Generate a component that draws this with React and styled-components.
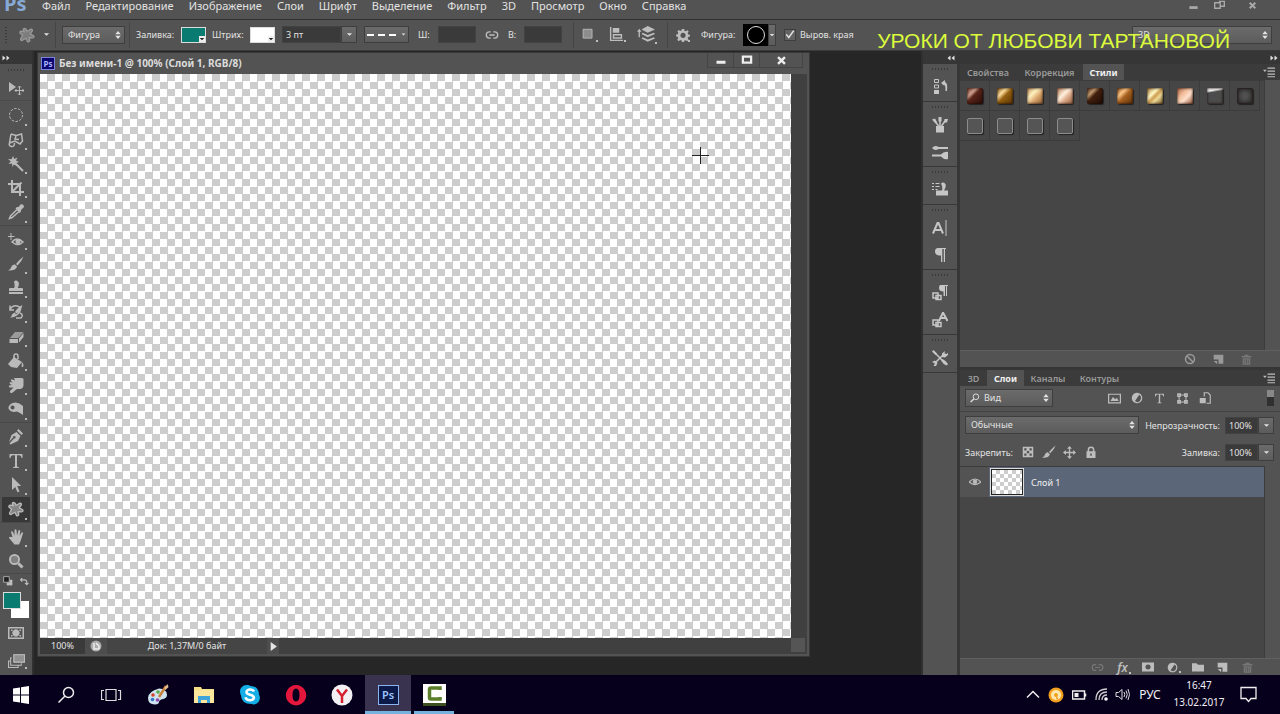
import React, { useState } from "react";
import styled, { createGlobalStyle, css } from "styled-components";

const GlobalStyle = createGlobalStyle`
    * {
        box-sizing: border-box;
    }
    body {
        margin: 0;
        overflow: hidden;
        background-color: #262626;
    }
    button, input, select {
        margin: 0;
        padding: 0;
        border: none;
        outline: none;
        border-radius: 0;
        font: inherit;
        color: inherit;
        background: none;
    }
    button {
        cursor: pointer;
    }
`;

const uiFont = `"Noto Sans", "Open Sans", sans-serif`;

const checker = (size) => css`
    background-color: #fff;
    background-image: repeating-conic-gradient(#cdcdcd 0 25%, #fff 0 50%);
    background-size: ${size}px ${size}px;
`;

const Screen = styled.div`
    position: relative;
    display: flex;
    flex-direction: column;
    height: 100vh;
    color: #e2e2e2;
    font-family: ${uiFont};
    font-size: 9px;
    line-height: 13px;
`;

/* ---------- icons ---------- */

const Svg = styled.svg`
    display: block;
    flex: none;
    fill: currentColor;
    stroke: none;

    .line {
        fill: none;
        stroke: currentColor;
    }
`;

const paths = {
    shape: <path d="M5.500 1.500q2 .3 2.500 2.800l4-2.100q2 .2 1.200 2l-2 2.600 3.600 2.200q.6 1.800-1.500 1.900l-3.100-.3.600 3.300q-1.200 1.700-2.500.3L7 11.300l-4.200 2.300q-1.700-.3-1.100-1.900l1.900-3.500L1 6.200q-.5-1.700 1.200-2l3 .4-.9-1.800q0-1.200 1.200-1.300z" fillOpacity=".6" stroke="currentColor" strokeWidth="1.300" />,
    move: <><path d="M1 2v10l7-5z" /><path className="line" d="M11.500 6v9M7 10.500h9M10 7.500l1.500-1.500L13 7.500M10 13.500l1.500 1.500 1.500-1.500M8.500 9L7 10.500 8.500 12M14.500 9l1.500 1.500-1.500 1.500" /></>,
    marquee: <circle className="line" cx="8" cy="8" r="6.500" strokeDasharray="2.500 1.500" />,
    lasso: <path className="line" strokeWidth="1.500" d="M3 2l-1.500 9 5.500-2 5 3 2.500-3-1-7L8 3.500 7 7l4 .5M3 2l5 1.500M1.500 11q-1 3 2 3.500t3-3.500" />,
    wand: <><path className="line" strokeWidth="2" d="M7 7l8 8" /><path d="M5 0l1.200 3L9.500 1.500 8 4.500l3 1.500-3 1 1 3-3.200-1.500L4.500 11l-.5-3.500L.5 8l2.300-2.500L0 3l3.500.2z" /></>,
    crop: <path className="line" strokeWidth="2" d="M4 0v12h12M0 4h12v12M13.500 2.500L5 11" />,
    dropper: <><path d="M9 3l1.500 0 2-2.500q2-1 3 .7t-.2 2.600L13 6v1.500L11.500 9 7.500 4.500z" /><path className="line" strokeWidth="1.500" d="M9 5.500l-6.500 6.500-1 2.500 2.700-1L11 7.500" /></>,
    heal: <><path className="line" d="M3 1v7M-.5 4.500h7" /><path className="line" strokeWidth="1.500" d="M4 10q5-6 11 0-5 5-11 0z" /><circle cx="10" cy="9.500" r="2.500" /></>,
    brush: <><path d="M15.500.5Q12 3 8 8l1.500 1.500Q14 5 15.500.5z" /><path d="M7 8.500l2 2Q8 15 0 14.500q3-1.500 3.500-4Q5 8 7 8.500z" /></>,
    stamp: <path d="M6 1.500Q8-.5 10 1.500T9.700 8H14q1 0 1 1v2H1V9q0-1 1-1h4.300Q7 5 6 1.500zM1 12h14v2H1z" />,
    history: <><path className="line" strokeWidth="1.500" d="M2 6Q4 1 9 2t3 5-6 5M2 1.500V6h4M12 9q4 2 1 5H8" /><path d="M14.500 1Q9 4 7 8l1.500 1.500Q13 7 14.500 1zM6.500 8.500L8 10q-1 4-6 3.500 2-1 2-3z" /></>,
    eraser: <><path d="M7 3h8.500l-5 6H2z" opacity=".7" /><path d="M1.500 10H10v4H1.500zM11 9.500l4.500-5.500v4L11 13.500z" /></>,
    bucket: <><path d="M6 4l8 5-5 6-6-1-3-3zM6.500 8" /><path className="line" strokeWidth="1.500" d="M6 8V3q0-2 2-2t2 2v3" /><path d="M14 9q2 2.500 1.500 4t-2 .5z" /></>,
    smudge: <path d="M6 1l8 0q1.500 0 1.500 1.500V8q0 3-3 4H9l-5 4q-2.500 0-2-2l3.500-3.500H1.500q-1.200-1-.3-2L4 8 2 7q-1-1.300.3-2L5 5.500 3 4q-.5-1.600.8-1.800L7 3.500z" />,
    dodge: <path fillRule="evenodd" d="M4.500 2Q10 0 15 5v9q-4-3-6-3.500-6 1.500-8-2T4.500 2zm0 2.500a2 2 0 1 0 .1 0z" />,
    pen: <path fillRule="evenodd" d="M10.500 0L15 4.500l-1.500 1.500L9 1.500zM8.500 3L12.500 7 10 12l-7.500 3.500L1.500 14.500l4-4.500.5-.5a1.300 1.300 0 1 0-1-1l-4 4.500L3.500 6z" />,
    type: <path d="M1.500 1h13v4h-1q-.3-2.800-2.500-2.800H9V13q0 1.200 2 1.200v.8H5v-.8q2 0 2-1.200V2.200H5Q2.800 2.200 2.500 5h-1z" />,
    arrow: <path d="M4 0v13l3.200-3 2.300 5.300 2-.9L9.200 9h4z" />,
    hand: <path d="M4.500 8L3 3q.7-1.500 2 0l1.500 3.500L6.500 1q1-1.500 2 0l.5 5.500L10.500 1.500q1.300-1 1.800.3L11.500 7l2-3.500q1.500-.8 1.500.7l-2.500 8L11 15.500H6.500L1 9q0-1.800 2-1z" />,
    zoom: <><circle cx="6.500" cy="6.500" r="4.500" className="line" strokeWidth="2" /><circle cx="6.500" cy="6.500" r="3.500" opacity=".45" /><path className="line" strokeWidth="3" d="M10.500 10.500l4 4" /></>,
    quickMask: <path fillRule="evenodd" d="M0 2h16v12H0zm1.500 1.500v9h13v-9zM3 4.500h1.500v1.500H3zm8.500 0H13v1.500h-1.500zM3 10h1.500v1.500H3zm8.500 0H13v1.500h-1.500zM8 4.300a3.700 3.700 0 1 1-.1 0z" />,
    screenMode: <><path d="M5 2h11v8H5z" opacity=".6" /><path className="line" d="M5.500 2.500h10v7h-10zM3.500 5.500h-1v7h10v-2M2.500 8.500h-2v6h9v-2" /></>,
    swap: <path className="line" strokeWidth="2" d="M1 5h7q4 0 4 4v4M4 2L1 5l3 3M9 10.500l3 3 3-3" />,
    defaults: <><path d="M6 6h9v9H6z" /><path d="M1 1h9v9H1z" fill="#222" stroke="#aaa" strokeWidth="1.500" /></>,
    link: <path className="line" strokeWidth="1.500" d="M6.500 4.500H5a3.500 3.500 0 0 0 0 7h1.500M9.500 4.500H11a3.500 3.500 0 0 1 0 7H9.500M5 8h6" />,
    pathOp: <><path d="M2 1h11v11H2z" opacity=".55" /><path className="line" d="M2.500 1.500h10v10h-10z" opacity=".8" /></>,
    align: <path fillRule="evenodd" d="M1 0h1.500v13.500H15V15H1zM4 1h7v5H4zM4 7.500h10v5H4zM5.500 9v2h7V9z" />,
    arrange: <path d="M9.500 0L16 3l-6.500 3L4 3zM5 6l4.500 2L15 6l1 1-6.500 3L4 7zM5 10l4.500 2 5.500-2 1 1-6.500 3L4 11zM0 5l2-2.500L4 5H2.600v5H1.400V5z" />,
    gear: <path fillRule="evenodd" d="M6.700 1h2.600l.4 2 1.500.6L13 2.500 14.500 4l-1.200 1.800.6 1.500 2 .4v2l-2 .5-.6 1.400 1.100 1.800-1.700 1.600-1.700-1.100-1.500.6-.4 1.500H6.800l-.5-1.700-1.500-.6L3.100 15l-1.700-1.700 1.100-1.700-.6-1.500-1.700-.5V7.500L2 7l.6-1.500-1.100-1.700 1.700-1.600 1.700 1.100 1.500-.6zM8 5.500a3 3 0 1 0 .1 0z" />,
    check: <path className="line" strokeWidth="2.500" d="M2 7l4 5 8-11" />,
    historyPanel: <><path className="line" d="M2.500.5h4v3h-4zM2.500 6h4v3h-4z" /><path d="M2 11h5v4H2zM9 4l4-3v2q3 1 2 9l-1.500 0q0-6-1-6.500V7z" /></>,
    brushes: <><path d="M4 9h8v6.500H4z" /><path className="line" strokeWidth="1.500" d="M6.500 9L3 4M8 9V3M9.500 9L13 4" /><path d="M0 2.500l3-1L5 5 3.500 6.500zM6.500 0h3v4.500h-3zM12.500 2L16 2l-1 3.500-3 0z" /></>,
    brushSettings: <path d="M0 4Q3 .5 6.500 3H16v2H6.500Q3 7.500 0 4zM0 10.500h9q3-3.500 7-2.500v7q-4 1-7-2.500H0z" />,
    cloneSource: <><path className="line" d="M0 1.500h2M3.500 1.500h4M0 4.500h2M3.500 4.500h4M0 7.500h2M3.500 7.500h2" /><path d="M9 1.500q2-2 4 0T12 8.500h4v5H4v-5h6Q11 5 9 1.500z" /></>,
    character: <><path className="line" strokeWidth="2" d="M1 13.500L5.500 3h1L11 13.500M3 10h6" /><path className="line" d="M14 0v16" /></>,
    paragraph: <path d="M6 1h8v1h-1v13h-1.200V2h-1.500v13H9V8.500H7q-4-.5-4-4T6 1z" />,
    paraStyles: <><path d="M9 0h7v1h-1v10h-1V1h-1v10h-1.500V6.500Q7 6.500 7 3t2-3z" /><path className="line" strokeWidth="1.500" d="M1 8h5v5H1zM4 10.500h5v4H4z" /></>,
    charStyles: <><path className="line" strokeWidth="2" d="M7 9L11 .5 15.500 9M9 6h5" /><path className="line" strokeWidth="1.500" d="M1 8h5v5H1zM4 10.500h5v4H4z" /></>,
    tools: <><path className="line" strokeWidth="1.500" d="M2 2l8 8M11 5l-8 8" /><path d="M0 1.500L1.500 0 5 3.500 3.500 5zM9 10.500L10.500 9q4 2 5.500 5l-1.500 1.500Q11 14 9 10.500zM10 3.500L13 1l-.5 2.500L15 4l1-1.500.0 2.500-3 2.500-3-.5zM0 12l3-1.500L5.500 13 4 16H1.500L3 13.500z" /></>,
    image: <path fillRule="evenodd" d="M0 2h16v12H0zm1.500 1.500v9h13v-9zM3 11l3-5 3 3 2-2 2 4z" />,
    adjust: <path fillRule="evenodd" d="M8 1a7 7 0 1 0 .1 0zM11 3.500q3 2 2.300 5.500t-4 4.500q-3 0-4-1.500z" />,
    vector: <path className="line" strokeWidth="1.500" d="M3 1v14M13 1v14M1 3h14M1 13h14M1 1h4v4H1zM11 1h4v4h-4zM1 11h4v4H1zM11 11h4v4h-4z" />,
    smart: <><path className="line" strokeWidth="1.500" d="M7 6V1h5l3 3v11h-5" /><path d="M1 8h8v7H1z" /></>,
    checkerLock: <path fillRule="evenodd" d="M1 1h14v14H1zm2 2v3h3V3zm7 0v3h3V3zM6.500 6.500v3h3v-3zM3 10v3h3v-3zm7 0v3h3v-3z" />,
    fourWay: <path d="M8 0l3 3.500H8.800V7.200h3.700V5L16 8l-3.500 3V8.800H8.800v3.700H11L8 16l-3-3.500h2.200V8.800H3.500V11L0 8l3.500-3v2.200h3.700V3.500H5z" />,
    lock: <path fillRule="evenodd" d="M2 7h1.500V5a4.500 4.500 0 0 1 9 0v2H14v9H2zm3.500 0h5V5a2.500 2.500 0 0 0-5 0zM7 10v3h2v-3z" />,
    eye: <><path className="line" strokeWidth="1.500" d="M0 8q8-8 16 0-8 7-16 0z" /><circle cx="8" cy="7.500" r="3" /></>,
    search: <><circle className="line" strokeWidth="1.500" cx="9.500" cy="6" r="4.500" /><path className="line" strokeWidth="2" d="M6 9.500L1 14.500" /></>,
    mask: <path fillRule="evenodd" d="M0 2h16v12H0zm8 2.500a3.500 3.500 0 1 0 .1 0z" />,
    folder: <path d="M0 3h6l2 2h8v9H0z" />,
    page: <path fillRule="evenodd" d="M1 1h14v13H8V8H1zM1 10h5v5z" />,
    trash: <path fillRule="evenodd" d="M1 3h4V1h6v2h4v2H1zM2.500 6h11v9.500h-11zM5 7.500V14h1V7.500zm2.500 0V14h1V7.500zm2.500 0V14h1V7.500z" />,
    ban: <><circle className="line" strokeWidth="2" cx="8" cy="8" r="6" /><path className="line" strokeWidth="2" d="M4 4l8 8" /></>,
    updown: <path d="M8 0l5.500 6.500h-11zM8 16l5.500-6.500h-11z" />,
    down: <path d="M2 5h12l-6 6z" />,
    right: <path d="M3 0l11 8-11 8z" />,
    dblRight: <path d="M1 3l6 5-6 5zM9 3l6 5-6 5z" />,
    dblLeft: <path d="M7 3L1 8l6 5zM15 3L9 8l6 5z" />,
    panelMenu: <path d="M0 5h5L2.500 8zM6 2h10v1.500H6zM6 6h10v1.500H6zM6 10h10v1.500H6zM6 13.500h10V15H6z" />,
    minimize: <path d="M2 9h12v4H2z" />,
    maximize: <path className="line" strokeWidth="3" d="M2.500 3.500h11v8h-11z" />,
    restore: <path className="line" strokeWidth="2" d="M1 4h8v8H1zM9 9h6V2H7" />,
    close: <path className="line" strokeWidth="3.500" d="M3 3l10 10M13 3L3 13" />,
};

const Icon = ({ name, size = 16, color }) => (
    <Svg width={size} height={size} viewBox="0 0 16 16" color={color} aria-hidden="true">
        {paths[name]}
    </Svg>
);

/* ---------- menu bar ---------- */

const MenuBar = styled.header`
    display: flex;
    align-items: center;
    height: 20px;
    flex: none;
    padding: 0 8px 8px 4px;
    background-color: #535353;
    border-bottom: 1px solid #303030;
    font-size: 11px;
`;

const Logo = styled.span`
    width: 31px;
    padding-bottom: 4px;
    color: #87a9d6;
    font-size: 20px;
    font-weight: 700;
    line-height: 20px;
`;

const MenuItem = styled.button`
    padding: 0 8px 0 7px;
    line-height: 12px;
`;

const Spacer = styled.div`
    flex: 1;
`;

const FrameButton = styled.button`
    display: flex;
    justify-content: center;
    width: ${props => props.$w || 26}px;
    color: #a9a9a9;
`;

const Caption = styled.h1`
    position: absolute;
    top: 28px;
    right: 50px;
    margin: 0;
    color: #ddfb3c;
    font-family: "Liberation Sans", sans-serif;
    font-size: 21px;
    font-weight: 400;
    line-height: 25px;
    white-space: nowrap;
    pointer-events: none;
`;

/* ---------- options bar ---------- */

const OptionsBar = styled.div`
    display: flex;
    align-items: center;
    flex: none;
    height: 31px;
    padding: 0 8px 1px 4px;
    background-color: #535353;
    border-bottom: 1px solid #3a3a3a;
    white-space: nowrap;
`;

const Cell = styled.div`
    display: flex;
    align-items: center;
    flex: none;
    gap: ${props => props.$gap || 0}px;
    width: ${props => props.$w}px;
`;

const Divider = styled.div`
    width: 1px;
    height: 26px;
    margin-right: ${props => props.$tight ? 0 : 6}px;
    background-color: #454545;
`;

const Grip = styled.div`
    width: ${props => props.$vertical ? 4 : 18}px;
    height: ${props => props.$vertical ? 18 : 4}px;
    background-image: radial-gradient(#3a3a3a 1px, transparent 1px);
    background-size: ${props => props.$vertical ? "4px 3px" : "3px 4px"};
`;

const SelectWrap = styled.span`
    position: relative;
    display: flex;
    align-items: center;
    flex: none;
    width: ${props => props.$w}px;
    height: 18px;
    background-image: linear-gradient(#6b6b6b, #5c5c5c);
    border: 1px solid #3e3e3e;

    select {
        appearance: none;
        width: 100%;
        padding: 0 14px 0 ${props => props.$pad || 5}px;
        line-height: 14px;
    }
    option {
        color: #222;
    }
    svg {
        position: absolute;
        right: 2px;
        pointer-events: none;
    }
    svg:nth-child(3) {
        left: 4px;
    }
`;

const Select = ({ label, options, width, pad, icon }) => (
    <SelectWrap $w={width} $pad={pad}>
        <select aria-label={label}>
            {options.map(o => <option key={o}>{o}</option>)}
        </select>
        <Icon name="updown" size={8} />
        {icon && <Icon name={icon} size={10} />}
    </SelectWrap>
);

const Swatch = styled.button`
    position: relative;
    width: 25px;
    height: 16px;
    background-color: ${props => props.$color};
    border: 1px solid #dcdcdc;

    svg {
        position: absolute;
        right: 0;
        bottom: 0;
        color: #222;
        background-color: #eee;
    }
`;

const Field = styled.input`
    width: ${props => props.$w}px;
    height: 17px;
    padding: 0 3px;
    background-color: #3a3a3a;
    border: 1px solid #424242;
    line-height: 14px;
`;

const DropButton = styled.button`
    display: flex;
    align-items: center;
    justify-content: center;
    width: ${props => props.$w || 16}px;
    height: ${props => props.$h || 17}px;
    background-image: linear-gradient(#6b6b6b, #5c5c5c);
    border: 1px solid #3e3e3e;
`;

const DashButton = styled(DropButton)`
    justify-content: space-evenly;
`;

const IconButton = styled.button`
    position: relative;
    display: flex;
    align-items: center;
    justify-content: center;
    flex: none;
    width: ${props => props.$w || 20}px;
    color: ${props => props.$dim ? "#777" : "#bdbdbd"};

    &::after {
        content: "";
        display: ${props => props.$more ? "block" : "none"};
        position: absolute;
        right: ${props => props.$corner || 4}px;
        bottom: 0;
        width: 2px;
        height: 2px;
        background-color: #bdbdbd;
    }
`;

const ShapePreview = styled.button`
    display: flex;
    align-items: center;
    justify-content: center;
    width: 25px;
    height: 22px;
    background-color: #000;
`;

const CheckLabel = styled.label`
    position: relative;
    display: flex;
    align-items: center;
    gap: 4px;

    input {
        appearance: none;
        width: 12px;
        height: 12px;
        background-color: #636363;
        border: 1px solid #3e3e3e;
    }
    svg {
        position: absolute;
        left: 1px;
        display: none;
        pointer-events: none;
    }
    input:checked + svg {
        display: block;
    }
`;

const Options = () => {
    const [snap, setSnap] = useState(true);
    return (
        <OptionsBar>
            <Cell $w={11}><Grip $vertical /></Cell>
            <Cell $w={40} $gap={4}>
                <IconButton $w={24} aria-label="Произвольная фигура"><Icon name="shape" size={16} color="#999" /></IconButton>
                <Icon name="down" size={7} />
            </Cell>
            <Divider />
            <Cell $w={67}><Select label="Режим" options={["Фигура", "Контур", "Пикселы"]} width={63} /></Cell>
            <Divider />
            <Cell $w={45}>Заливка:</Cell>
            <Cell $w={31}><Swatch $color="#0a7b70" aria-label="Цвет заливки"><Icon name="down" size={6} /></Swatch></Cell>
            <Cell $w={38}>Штрих:</Cell>
            <Cell $w={32}><Swatch $color="#fff" aria-label="Цвет штриха"><Icon name="down" size={6} /></Swatch></Cell>
            <Cell $w={82}>
                <Field $w={59} defaultValue="3 пт" aria-label="Толщина штриха" />
                <DropButton aria-label="Выбрать толщину"><Icon name="down" size={7} /></DropButton>
            </Cell>
            <Cell $w={54}>
                <DashButton $w={45} aria-label="Тип штриха">
                    <svg width="31" height="2"><path d="M0 1h31" stroke="#fff" strokeWidth="2" strokeDasharray="7 4" /></svg>
                    <Icon name="down" size={5} />
                </DashButton>
            </Cell>
            <Cell as="label" htmlFor="w" $w={20}>Ш:</Cell>
            <Field id="w" $w={38} />
            <Cell $w={32}><IconButton $w={32} aria-label="Сохранять пропорции"><Icon name="link" size={14} /></IconButton></Cell>
            <Cell as="label" htmlFor="h" $w={16}>В:</Cell>
            <Cell $w={49}><Field id="h" $w={38} /></Cell>
            <Divider $tight />
            <Cell $w={93}>
                <IconButton $w={28} $more aria-label="Операции с контуром"><Icon name="pathOp" size={14} /></IconButton>
                <IconButton $w={28} $more aria-label="Выравнивание"><Icon name="align" size={15} /></IconButton>
                <IconButton $w={31} $more aria-label="Порядок"><Icon name="arrange" size={18} /></IconButton>
            </Cell>
            <Divider />
            <Cell $w={27}><IconButton $w={17} $more $corner={1} aria-label="Параметры"><Icon name="gear" size={14} /></IconButton></Cell>
            <Cell $w={42}>Фигура:</Cell>
            <Cell $w={41}>
                <ShapePreview aria-label="Форма">
                    <svg width="20" height="20"><circle cx="10" cy="10" r="8.500" fill="none" stroke="#ddd" /></svg>
                </ShapePreview>
                <DropButton $w={8} $h={22} aria-label="Выбрать форму"><Icon name="down" size={6} /></DropButton>
            </Cell>
            <CheckLabel>
                <input type="checkbox" checked={snap} onChange={() => setSnap(!snap)} />
                <Icon name="check" size={10} />
                Выров. края
            </CheckLabel>
            <Spacer />
            <Select label="Рабочая среда" options={["3D", "Основная рабочая среда"]} width={140} />
        </OptionsBar>
    );
};

/* ---------- tools ---------- */

const Workspace = styled.main`
    display: flex;
    flex: 1;
    min-height: 0;
    background-color: #262626;
`;

const Toolbar = styled.nav`
    display: flex;
    flex-direction: column;
    flex: none;
    width: 34px;
    background-color: #535353;
    border-right: 2px solid #303030;
`;

const Collapse = styled.div`
    display: flex;
    align-items: center;
    justify-content: ${props => props.$right ? "flex-end" : "flex-start"};
    flex: none;
    height: 13px;
    padding: 0 2px;
    background-color: #363636;
`;

const ToolList = styled.div`
    display: flex;
    flex-direction: column;
    flex: 1;
    gap: 2px;
`;

const ToolGroup = styled.div`
    display: flex;
    flex-direction: column;
    flex: ${props => props.$count};
    border-bottom: 1px solid #4a4a4a;
`;

const Tool = styled.button`
    position: relative;
    display: flex;
    align-items: center;
    justify-content: center;
    flex: 1;
    min-height: 0;
    margin-left: 2px;
    margin-right: 2px;
    color: #bababa;
    background-color: ${props => props.$active ? "#383838" : "transparent"};

    &::after {
        content: "";
        display: ${props => props.$more ? "block" : "none"};
        position: absolute;
        right: 3px;
        bottom: 2px;
        width: 2px;
        height: 2px;
        background-color: #bababa;
    }
`;

const GripRow = styled.div`
    display: flex;
    align-items: center;
    justify-content: center;
    flex: none;
    height: ${props => props.$h || 9}px;
`;

const ColorArea = styled.div`
    display: grid;
    grid-template-columns: 16px 16px;
    grid-template-rows: 14px 33px 24px 30px;
    justify-items: center;
    align-items: center;
    flex: none;
`;

const ColorPair = styled.div`
    grid-column: 1 / 3;
    display: grid;
    grid-template-columns: 8px 10px 8px;
    grid-template-rows: 9px 8px 9px;
`;

const ColorChip = styled.button`
    grid-area: ${props => props.$front ? "1 / 1 / 3 / 3" : "2 / 2 / 4 / 4"};
    z-index: ${props => props.$front ? 1 : 0};
    background-color: ${props => props.$color};
    border: ${props => props.$front ? "1px solid #ddd" : "none"};
`;

const WideTool = styled(Tool)`
    grid-column: 1 / 3;
    width: 28px;
    height: 22px;
`;

const toolGroups = [
    [["move", "Перемещение"]],
    [["marquee", "Овальная область"], ["lasso", "Лассо"], ["wand", "Волшебная палочка"], ["crop", "Рамка"], ["dropper", "Пипетка"]],
    [["heal", "Восстанавливающая кисть"], ["brush", "Кисть"], ["stamp", "Штамп"], ["history", "Архивная кисть"], ["eraser", "Ластик"], ["bucket", "Заливка"], ["smudge", "Палец"], ["dodge", "Губка"]],
    [["pen", "Перо"], ["type", "Текст"], ["arrow", "Выделение контура"], ["shape", "Произвольная фигура"]],
    [["hand", "Рука"], ["zoom", "Масштаб"]],
];

const Tools = () => {
    const [tool, setTool] = useState("shape");
    return (
        <Toolbar>
            <Collapse><Icon name="dblRight" size={8} /></Collapse>
            <GripRow $h={12}><Grip /></GripRow>
            <ToolList>
                {toolGroups.map((group, i) => (
                    <ToolGroup key={i} $count={group.length}>
                        {group.map(([name, title]) => (
                            <Tool
                                key={name}
                                title={title}
                                $active={tool === name}
                                $more={name !== "move" && name !== "zoom"}
                                onClick={() => setTool(name)}
                            >
                                <Icon name={name} />
                            </Tool>
                        ))}
                    </ToolGroup>
                ))}
            </ToolList>
            <ColorArea>
                <IconButton $w={14} aria-label="Цвета по умолчанию"><Icon name="defaults" size={10} /></IconButton>
                <IconButton $w={14} aria-label="Поменять цвета"><Icon name="swap" size={9} /></IconButton>
                <ColorPair>
                    <ColorChip $front $color="#0a7b70" aria-label="Основной цвет" />
                    <ColorChip $color="#fff" aria-label="Фоновый цвет" />
                </ColorPair>
                <WideTool aria-label="Быстрая маска"><Icon name="quickMask" /></WideTool>
                <WideTool $more aria-label="Режим экрана"><Icon name="screenMode" size={17} /></WideTool>
            </ColorArea>
        </Toolbar>
    );
};

/* ---------- document window ---------- */

const Desk = styled.div`
    display: flex;
    flex: 1;
    min-width: 0;
    padding: 2px 112px 19px 4px;
`;

const DocWindow = styled.section`
    display: flex;
    flex-direction: column;
    flex: 1;
    min-width: 0;
    border: 2px solid #535353;
    border-top: none;
    outline: 1px solid #383838;
`;

const TitleBar = styled.div`
    display: flex;
    align-items: center;
    flex: none;
    height: 21px;
    padding: 0 0 1px 1px;
    background-color: #535353;
    font-size: 10px;
    font-weight: 700;
    color: #dcdcdc;
`;

const DocBadge = styled.span`
    width: 14px;
    height: 13px;
    margin-right: 4px;
    color: #a9b4ff;
    background-color: #0b0670;
    border: 1px solid #7b84d8;
    font-size: 8px;
    line-height: 11px;
    text-align: center;
`;

const DocButtons = styled.div`
    display: flex;
    align-self: flex-start;
    height: 15px;
    margin-right: 4px;
    border: 1px solid #444;
    border-top: none;
`;

const DocButton = styled.button`
    display: flex;
    align-items: center;
    justify-content: center;
    width: ${props => props.$w}px;
    border-left: 1px solid #444;
    color: #eee;

    &:first-child {
        border-left: none;
    }
`;

const DocBody = styled.div`
    display: grid;
    grid-template-columns: 1fr 16px;
    grid-template-rows: 1fr 16px;
    flex: 1;
    background-color: #404040;
`;

const Canvas = styled.div`
    position: relative;
    overflow: hidden;
    ${checker(15)}
`;

const Cursor = styled.svg`
    position: absolute;
    left: 652px;
    top: 73px;
`;

const StatusBar = styled.div`
    display: flex;
    align-items: center;
    grid-row: 2;
    color: #e4e4e4;
`;

const StatusCell = styled.div`
    width: ${props => props.$w}px;
    text-align: center;
    line-height: 16px;
    background-color: ${props => props.$fill || "#454545"};
`;

const StatusButton = styled.button`
    display: flex;
    align-items: center;
    justify-content: center;
    width: ${props => props.$w}px;
    height: 16px;
    background-color: #4d4d4d;
`;

const Corner = styled.div`
    grid-area: 2 / 2;
    margin: 0 2px 2px 0;
    background-color: #555;
`;

const Document = () => (
    <DocWindow>
        <TitleBar>
            <DocBadge>Ps</DocBadge>
            Без имени-1 @ 100% (Слой 1, RGB/8)
            <Spacer />
            <DocButtons>
                <DocButton $w={25} aria-label="Свернуть"><Icon name="minimize" size={12} /></DocButton>
                <DocButton $w={26} aria-label="Развернуть"><Icon name="maximize" size={12} /></DocButton>
                <DocButton $w={43} aria-label="Закрыть"><Icon name="close" size={11} /></DocButton>
            </DocButtons>
        </TitleBar>
        <DocBody>
            <Canvas>
                <Cursor width="17" height="17">
                    <path d="M8.500 0v17M0 8.500h17" stroke="#222" />
                </Cursor>
            </Canvas>
            <StatusBar>
                <StatusCell $w={45} $fill="#3a3a3a">100%</StatusCell>
                <StatusButton $w={22} aria-label="Просмотр">
                    <svg width="12" height="12"><circle cx="6" cy="6" r="5.500" fill="#aaa" /><path d="M4 3v6h5M6 3l3 3v3" fill="none" stroke="#eee" strokeWidth="1.500" /></svg>
                </StatusButton>
                <StatusCell $w={160}>Док: 1,37M/0 байт</StatusCell>
                <StatusButton $w={12} aria-label="Сведения"><Icon name="right" size={9} /></StatusButton>
            </StatusBar>
            <Corner />
        </DocBody>
    </DocWindow>
);

/* ---------- collapsed dock ---------- */

const Dock = styled.aside`
    display: flex;
    flex-direction: column;
    flex: none;
    width: 39px;
    background-color: #535353;
    border-left: 2px solid #303030;
    border-right: 3px solid #363636;
`;

const DockGroup = styled.div`
    display: flex;
    flex-direction: column;
    padding-bottom: 1px;
    border-bottom: 1px solid #383838;
`;

const DockButton = styled.button`
    display: flex;
    align-items: center;
    justify-content: center;
    height: 27px;
    color: #c6c6c6;
`;

const dockGroups = [
    [["historyPanel", "История"]],
    [["brushes", "Наборы кистей"], ["brushSettings", "Кисть"]],
    [["cloneSource", "Источник клонов"]],
    [["character", "Символ"], ["paragraph", "Абзац"]],
    [["paraStyles", "Стили абзацев"], ["charStyles", "Стили символов"]],
    [["tools", "Наборы инструментов"]],
];

/* ---------- panels ---------- */

const Panels = styled.aside`
    display: flex;
    flex-direction: column;
    flex: none;
    width: 320px;
    background-color: #363636;
`;

const Panel = styled.section`
    display: flex;
    flex-direction: column;
    flex: ${props => props.$h ? "none" : 1};
    height: ${props => props.$h ? props.$h + "px" : "auto"};
    margin-bottom: ${props => props.$h ? 3 : 0}px;
    min-height: 0;
    background-color: #535353;
`;

const Tabs = styled.div`
    display: flex;
    align-items: center;
    flex: none;
    height: 16px;
    background-color: #3b3b3b;
`;

const Tab = styled.button`
    width: ${props => props.$w}px;
    height: 100%;
    text-align: center;
    white-space: nowrap;
    color: ${props => props.$active ? "#f0f0f0" : "#999"};
    background-color: ${props => props.$active ? "#535353" : "transparent"};
    font-weight: ${props => props.$active ? 700 : 600};
`;

const PanelBody = styled.div`
    flex: 1;
    min-height: 0;
    margin-right: 15px;
    background-color: #464646;
    border-right: 1px solid #3c3c3c;
    border-top: 1px solid #3c3c3c;
`;

const PanelFooter = styled.div`
    display: flex;
    align-items: center;
    justify-content: flex-end;
    flex: none;
    height: 17px;
    padding-right: 20px;
    border-top: 1px solid #606060;
`;

const PanelTabs = ({ tabs, initial }) => {
    const [active, setActive] = useState(initial);
    return (
        <Tabs role="tablist">
            {tabs.map(([title, width]) => (
                <Tab key={title} role="tab" $w={width} $active={active === title} onClick={() => setActive(title)}>
                    {title}
                </Tab>
            ))}
            <Spacer />
            <IconButton $w={22} aria-label="Меню панели"><Icon name="panelMenu" size={12} /></IconButton>
        </Tabs>
    );
};

const StyleGrid = styled.div`
    display: grid;
    grid-template-columns: repeat(10, 30px);
    grid-auto-rows: 30px;
`;

const StyleCell = styled.button`
    display: flex;
    align-items: center;
    justify-content: center;
    border-right: 1px solid #3c3c3c;
    border-bottom: 1px solid #3c3c3c;
`;

const bevels = {
    cherry: "linear-gradient(135deg, #6b3024, #d0a090 30%, #5a2419 45%, #2a0d08)",
    amber: "linear-gradient(135deg, #7a4c10, #ffe0a0 30%, #94600f 50%, #5a3505)",
    sand: "linear-gradient(135deg, #c08a50, #fff2c0 35%, #dca870 60%, #8a5c30)",
    peach: "linear-gradient(135deg, #b87850, #fff0dd 40%, #e0b090 60%, #945c3b)",
    umber: "linear-gradient(135deg, #4a2412, #c09a70 28%, #43200f 45%, #1c0b04)",
    copper: "linear-gradient(135deg, #824510, #ffc98a 30%, #a86220 50%, #5c3008)",
    gold: "linear-gradient(135deg, #a87830, #fff8c8 35%, #cf9f50 50%, #eed898 65%, #6f5520)",
    rose: "linear-gradient(135deg, #a86040, #f0bb98 35%, #ffe0cc 60%, #904f30)",
    glint: "linear-gradient(170deg, #f4f4f4 0 18%, #4c4c4c 28%)",
    shadow: "radial-gradient(#505050 20%, #333 70%)",
    plain: "#555",
};

const Bevel = styled.span`
    width: 16px;
    height: 16px;
    background: ${props => bevels[props.$kind]};
    border: ${props => props.$kind === "plain" ? "1px solid #8c8c8c" : "none"};
    border-radius: 2px;
    box-shadow: 1px 1px 1px #222${props => props.$kind === "plain" ? "" : ", inset 0 0 2px 1px rgba(20, 5, 0, .5)"};
`;

const styleNames = ["cherry", "amber", "sand", "peach", "umber", "copper", "gold", "rose", "glint", "shadow", "plain", "plain", "plain", "plain"];

const Row = styled.div`
    display: flex;
    align-items: center;
    flex: none;
    height: ${props => props.$h || 27}px;
    padding: 0 6px 1px 5px;
    white-space: nowrap;
    border-bottom: ${props => props.$line ? "1px solid #434343" : "none"};
`;

const RowLabel = styled.label`
    margin-right: 5px;
`;

const Toggle = styled.button`
    width: 7px;
    height: 16px;
    background-image: linear-gradient(#888 0 45%, #303030 45%);
`;

const LayerList = styled.ul`
    margin: 0;
    padding: 0;
    list-style: none;
`;

const LayerRow = styled.li`
    display: flex;
    align-items: center;
    height: 30px;
    background-color: #5b6779;
    color: #f0f0f0;
`;

const EyeCell = styled.button`
    display: flex;
    align-items: center;
    justify-content: center;
    width: 29px;
    height: 100%;
    color: #bbb;
    background-color: #535353;
`;

const Thumb = styled.div`
    width: 32px;
    height: 26px;
    margin: 0 8px 0 2px;
    border: 1px solid #222;
    outline: 1px solid #ddd;
    ${checker(8)}
`;

const FxText = styled.i`
    font-size: 12px;
    font-weight: 600;
`;

const StylesPanel = () => (
    <Panel $h={303}>
        <PanelTabs tabs={[["Свойства", 56], ["Коррекция", 67], ["Стили", 41]]} initial="Стили" />
        <PanelBody>
            <StyleGrid>
                {styleNames.map((kind, i) => (
                    <StyleCell key={i} aria-label={"Стиль " + (i + 1)}><Bevel $kind={kind} /></StyleCell>
                ))}
            </StyleGrid>
        </PanelBody>
        <PanelFooter>
            <IconButton $w={28} $dim aria-label="Очистить"><Icon name="ban" size={12} color="#999" /></IconButton>
            <IconButton $w={28} $dim aria-label="Создать"><Icon name="page" size={11} color="#999" /></IconButton>
            <IconButton $w={28} $dim aria-label="Удалить"><Icon name="trash" size={11} /></IconButton>
        </PanelFooter>
    </Panel>
);

const LayersPanel = () => (
    <Panel>
        <PanelTabs tabs={[["3D", 27], ["Слои", 37], ["Каналы", 48], ["Контуры", 55]]} initial="Слои" />
        <Row $h={26} $line>
            <Select label="Фильтр слоев" options={["Вид", "Имя", "Эффект"]} width={88} pad={18} icon="search" />
            <Cell $w={50} />
            <IconButton $w={23} aria-label="Пикселы"><Icon name="image" size={13} /></IconButton>
            <IconButton $w={22} aria-label="Коррекции"><Icon name="adjust" size={12} /></IconButton>
            <IconButton $w={23} aria-label="Текст"><Icon name="type" size={11} /></IconButton>
            <IconButton $w={23} aria-label="Фигуры"><Icon name="vector" size={11} /></IconButton>
            <IconButton $w={22} aria-label="Смарт-объекты"><Icon name="smart" size={12} /></IconButton>
            <Spacer />
            <Toggle aria-label="Включить фильтр" />
        </Row>
        <Row>
            <Select label="Режим наложения" options={["Обычные", "Затемнение", "Умножение"]} width={174} />
            <Spacer />
            <RowLabel htmlFor="opacity">Непрозрачность:</RowLabel>
            <Field id="opacity" $w={33} defaultValue="100%" />
            <DropButton aria-label="Изменить непрозрачность"><Icon name="down" size={7} /></DropButton>
        </Row>
        <Row>
            <Cell $w={52}>Закрепить:</Cell>
            <IconButton $w={21} aria-label="Прозрачные пикселы"><Icon name="checkerLock" size={12} /></IconButton>
            <IconButton $w={21} aria-label="Цвета"><Icon name="brush" size={14} /></IconButton>
            <IconButton $w={21} aria-label="Положение"><Icon name="fourWay" size={13} /></IconButton>
            <IconButton $w={21} aria-label="Все"><Icon name="lock" size={12} /></IconButton>
            <Spacer />
            <RowLabel htmlFor="fill">Заливка:</RowLabel>
            <Field id="fill" $w={33} defaultValue="100%" />
            <DropButton aria-label="Изменить заливку"><Icon name="down" size={7} /></DropButton>
        </Row>
        <PanelBody>
            <LayerList>
                <LayerRow>
                    <EyeCell aria-label="Видимость слоя"><Icon name="eye" size={12} /></EyeCell>
                    <Thumb />
                    Слой 1
                </LayerRow>
            </LayerList>
        </PanelBody>
        <PanelFooter>
            <IconButton $w={25} $dim aria-label="Связать"><Icon name="link" size={13} /></IconButton>
            <IconButton $w={25} $more aria-label="Стиль слоя"><FxText>fx</FxText></IconButton>
            <IconButton $w={25} aria-label="Маска"><Icon name="mask" size={12} /></IconButton>
            <IconButton $w={25} $more aria-label="Корректирующий слой"><Icon name="adjust" size={11} /></IconButton>
            <IconButton $w={25} aria-label="Группа"><Icon name="folder" size={12} /></IconButton>
            <IconButton $w={25} aria-label="Новый слой"><Icon name="page" size={11} /></IconButton>
            <IconButton $w={25} $dim aria-label="Удалить слой"><Icon name="trash" size={11} /></IconButton>
        </PanelFooter>
    </Panel>
);

/* ---------- windows taskbar ---------- */

const TaskBar = styled.footer`
    display: flex;
    align-items: stretch;
    flex: none;
    height: 39px;
    padding-right: 15px;
    color: #f0f0f5;
    background-color: #07001d;
`;

const TaskButton = styled.button`
    display: flex;
    align-items: center;
    justify-content: center;
    width: ${props => props.$w || 46}px;
    margin-right: ${props => props.$active ? 3 : 0}px;
    background-color: ${props => props.$active ? "#3a3350" : "transparent"};
    border-bottom: 3px solid ${props => props.$running ? "#76b2dd" : "transparent"};
    border-top: 3px solid transparent;
`;

const TrayButton = styled.button`
    display: flex;
    align-items: center;
    justify-content: center;
    width: ${props => props.$w}px;
    font-size: 12px;
`;

const Clock = styled.time`
    width: 64px;
    padding-top: 2px;
    font-size: 10px;
    line-height: 17px;
    text-align: center;
`;

const PsTile = styled.span`
    width: 21px;
    height: 20px;
    color: #9dc3ff;
    background-color: #0c1a4a;
    border: 1px solid #8bb4f0;
    font-size: 11px;
    font-weight: 600;
    line-height: 18px;
`;

const taskIcons = [
    ["Пуск", <path d="M2 4.500l7-1v7H2zM10 3.300l8-1.300v8.500h-8zM2 11.500h7v7l-7-1zM10 11.500h8V20l-8-1.300z" fill="#fff" />],
    ["Поиск", <path d="M18.500 8.500a5 5 0 1 1-10 0 5 5 0 0 1 10 0zM10 12L3.500 18.500" fill="none" stroke="#eee" strokeWidth="1.500" />],
    ["Представление задач", <path d="M5 5.500h10v11H5zM3 6.500H.5v9H3M17 6.500h2.500v9H17" fill="none" stroke="#ddd" strokeWidth="1.200" />],
    ["Paint", <><path d="M12 4.500q8 .5 8 6.500 0 3-4 4t-4 3-4 2.500Q1 20.500 1 14T12 4.500z" fill="#cfe3ee" /><circle cx="6" cy="11" r="1.800" fill="#d6402e" /><circle cx="11" cy="8" r="1.800" fill="#5aa845" /><circle cx="5.500" cy="15.500" r="1.800" fill="#3675c9" /><circle cx="10.500" cy="16" r="1.800" fill="#9248a8" /><path d="M19 2l-7 11" stroke="#c7813c" strokeWidth="2.500" /><path d="M20.500 0l1 3-3 3-1-2z" fill="#e5c193" /></>],
    ["Проводник", <><path d="M1 3h7l1 2h12v14H1z" fill="#f6dc83" /><path d="M1 6h20v13H1z" fill="#fbe79b" /><path d="M5 12h12v7h-3v-3H8v3H5z" fill="#3ea4d9" /></>],
    ["Skype", <><path d="M7 1q3-.5 4.500 1 8 0 8.500 8.500 2 4-.5 7.500-3 3.500-7 2Q2.500 20 2 11.500 0 7 2 4t5-3z" fill="#12aee5" /><path d="M15 7.500Q14 5.500 11 5.500T7.500 8Q7.500 10 11 10.700t4 3q-.3 2.600-4 2.600t-4.500-3" fill="none" stroke="#fff" strokeWidth="2.500" /></>],
    ["Opera", <path fillRule="evenodd" d="M11 1a10.200 10.200 0 1 0 .1 0zM11 4.500q3.500 0 3.500 6.500T11 17.500 7.500 11 11 4.500z" fill="#e3173b" />],
    ["Яндекс", <><circle cx="11" cy="11" r="10.500" fill="#f2f0f2" /><path d="M6 5.500l5 6.500 5-6.500M11 11.500V19" fill="none" stroke="#d51f2f" strokeWidth="2.500" /></>],
];

const Taskbar = () => (
    <TaskBar>
        {taskIcons.map(([title, art], i) => (
            <TaskButton key={title} title={title} $w={i === 0 ? 43 : 46}>
                <svg width="22" height="22" viewBox="0 0 22 22">{art}</svg>
            </TaskButton>
        ))}
        <TaskButton title="Photoshop" $active $running><PsTile>Ps</PsTile></TaskButton>
        <TaskButton title="Camtasia" $running $w={40}>
            <svg width="23" height="22" viewBox="0 0 23 22">
                <path d="M0 0h23v22H0z" fill="#fff" />
                <path d="M0 19h23v3H0z" fill="#3d4f20" />
                <path d="M17 6V4H8q-1.500 0-1.500 1.500v8Q6.500 15 8 15h9v-2" fill="none" stroke="#5b7f2b" strokeWidth="3.500" />
            </svg>
        </TaskButton>
        <Spacer />
        <TrayButton $w={22} aria-label="Скрытые значки">
            <svg width="14" height="9"><path d="M1 7.500L7 1.500l6 6" fill="none" stroke="#eee" strokeWidth="1.500" /></svg>
        </TrayButton>
        <TrayButton $w={23} aria-label="Антивирус">
            <svg width="16" height="16"><circle cx="8" cy="8" r="7.500" fill="#f3a01f" /><circle cx="8" cy="8" r="5" fill="#ffe9b0" /><circle cx="8" cy="8" r="2" fill="#f3a01f" /><path d="M8.500 9.500l1 3" fill="none" stroke="#f3a01f" strokeWidth="1.500" /></svg>
        </TrayButton>
        <TrayButton $w={24} aria-label="Батарея">
            <svg width="15" height="10"><path d="M.5 1h12v8H.5zM13.500 3.500v3" fill="none" stroke="#eee" strokeWidth="1.500" /><path d="M2.500 3h4v4h-4z" fill="#eee" /></svg>
        </TrayButton>
        <TrayButton $w={21} aria-label="Сеть">
            <svg width="13" height="13"><path d="M1 12Q1 1 12 1M4 12q0-8 8-8M7 12q0-5 5-5" fill="none" stroke="#ccc" strokeWidth="1.300" /><circle cx="11" cy="11" r="1.800" fill="#fff" /></svg>
        </TrayButton>
        <TrayButton $w={21} aria-label="Громкость">
            <svg width="15" height="13"><path d="M1 4.500h2.500l3.500-3v10l-3.500-3H1zM9 4q1.500 2.500 0 5M11 2.500q2.500 4 0 8M13 1q3 5.500 0 11" fill="none" stroke="#ddd" /></svg>
        </TrayButton>
        <TrayButton $w={34}>РУС</TrayButton>
        <Clock>16:47<br />13.02.2017</Clock>
        <TrayButton $w={34} aria-label="Уведомления">
            <svg width="17" height="17"><path d="M1 1.500h15v11h-5l-2.500 3-2.500-3H1z" fill="none" stroke="#eee" strokeWidth="1.300" /></svg>
        </TrayButton>
    </TaskBar>
);

const menus = ["Файл", "Редактирование", "Изображение", "Слои", "Шрифт", "Выделение", "Фильтр", "3D", "Просмотр", "Окно", "Справка"];

const App = () => (
    <>
        <GlobalStyle />
        <Screen>
            <MenuBar>
                <Logo>Ps</Logo>
                {menus.map(item => <MenuItem key={item}>{item}</MenuItem>)}
                <Spacer />
                <FrameButton aria-label="Свернуть"><Icon name="minimize" size={11} /></FrameButton>
                <FrameButton aria-label="Восстановить"><Icon name="restore" size={11} /></FrameButton>
                <FrameButton $w={40} aria-label="Закрыть"><Icon name="close" size={9} /></FrameButton>
            </MenuBar>
            <Options />
            <Workspace>
                <Tools />
                <Desk><Document /></Desk>
                <Dock>
                    <Collapse $right><Icon name="dblLeft" size={8} /></Collapse>
                    {dockGroups.map((group, i) => (
                        <DockGroup key={i}>
                            <GripRow><Grip /></GripRow>
                            {group.map(([name, title]) => (
                                <DockButton key={name} title={title}><Icon name={name} /></DockButton>
                            ))}
                        </DockGroup>
                    ))}
                </Dock>
                <Panels>
                    <Collapse $right><Icon name="dblRight" size={8} /></Collapse>
                    <StylesPanel />
                    <LayersPanel />
                </Panels>
            </Workspace>
            <Taskbar />
            <Caption>УРОКИ ОТ ЛЮБОВИ ТАРТАНОВОЙ</Caption>
        </Screen>
    </>
);

export default App;
